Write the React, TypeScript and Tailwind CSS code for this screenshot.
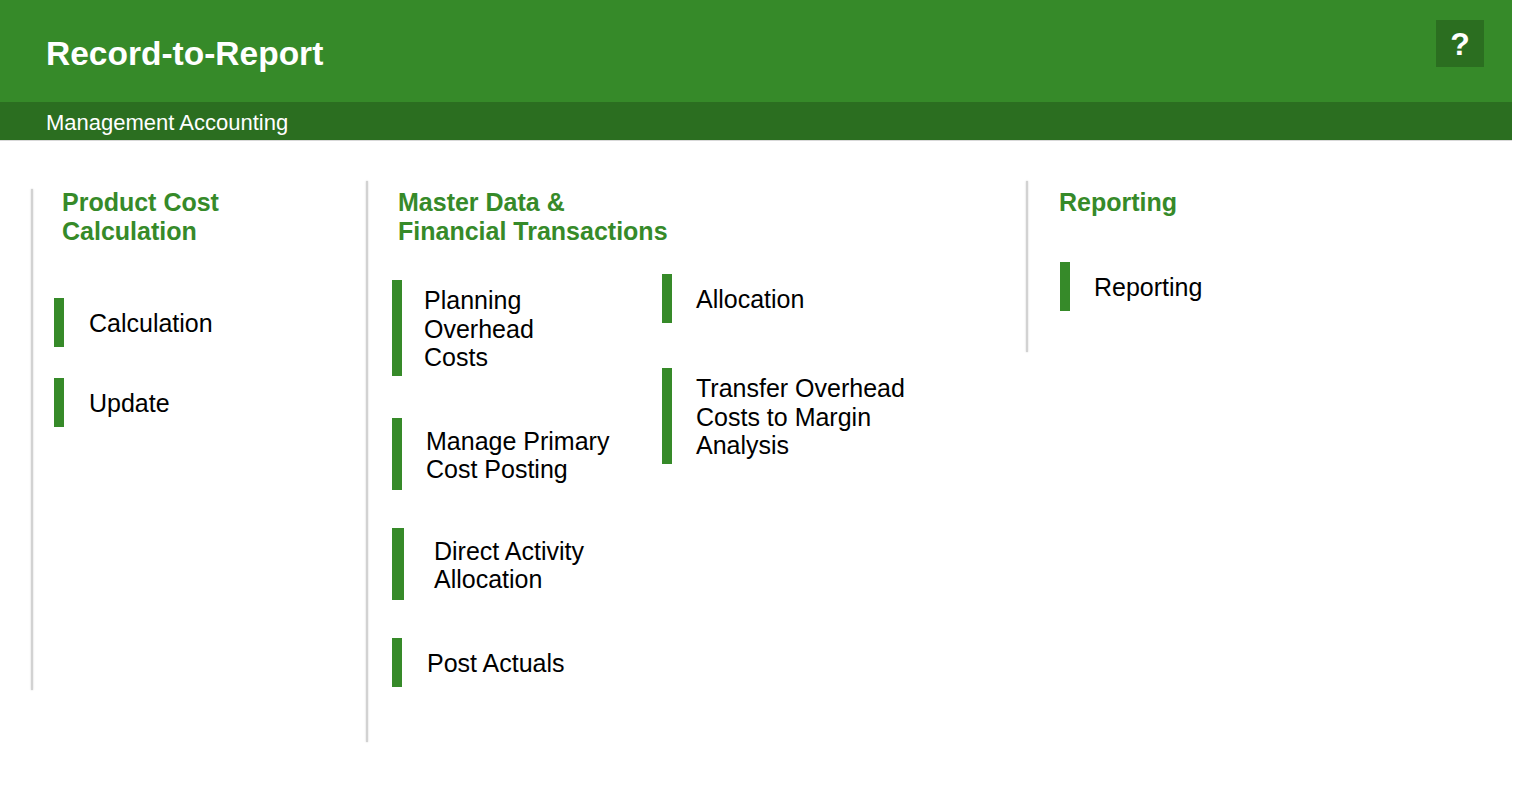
const font = { fontFamily: '"Liberation Sans", Arial, sans-serif' };

interface Tile {
  label: string[];
  height: number;
  gap: number;
  top: number;
  bar?: number;
}

const Bar = ({ h, w = 10 }: { h: number; w?: number }) => (
  <div className="bg-[#368a29] shrink-0" style={{ height: h, width: w }} />
);

const TileItem = ({ label, height, gap, top, bar = 10 }: Tile) => (
  <div className="flex items-center" style={{ marginTop: top }}>
    <Bar h={height} w={bar} />
    <div
      className="text-[25px] leading-[28.5px] text-black pt-[2px]"
      style={{ marginLeft: gap }}
    >
      {label.map((l) => (
        <div key={l}>{l}</div>
      ))}
    </div>
  </div>
);

const Divider = ({ top, h }: { top: number; h: number }) => (
  <div
    className="w-[2px] bg-[#d2d2d2] shadow-[0_0_2px_rgba(0,0,0,0.2)] shrink-0"
    style={{ marginTop: top, height: h }}
  />
);

const Heading = ({ lines, left }: { lines: string[]; left: number }) => (
  <div
    className="text-[25px] leading-[29px] font-bold text-[#368a29]"
    style={{ marginLeft: left }}
  >
    {lines.map((l) => (
      <div key={l}>{l}</div>
    ))}
  </div>
);

export default function App() {
  return (
    <div className="w-[1514px] min-h-[805px] bg-white" style={font}>
      <header className="w-[1512px]">
        <div className="h-[102px] bg-[#368a29] flex items-start justify-between pl-[46px] pr-[28px]">
          <h1 className="text-[33.5px] font-bold text-white leading-none mt-[37px]">
            Record-to-Report
          </h1>
          <button className="mt-[20px] w-[48px] h-[47px] bg-[#2b6e20] text-white text-[32px] font-bold leading-none flex items-center justify-center">
            ?
          </button>
        </div>
        <div className="h-[39px] bg-[#2b6e20] border-b border-[#d9d9d9] pl-[46px] flex items-center">
          <span className="text-[22px] text-white leading-none pt-[3px]">
            Management Accounting
          </span>
        </div>
      </header>

      <main className="flex items-start pl-[31px]">
        {/* Product Cost Calculation */}
        <div className="flex w-[335px]">
          <Divider top={48} h={501} />
          <div className="pt-[47px]">
            <Heading lines={["Product Cost", "Calculation"]} left={29} />
            <div className="ml-[21px]">
              <TileItem label={["Calculation"]} height={49} gap={25} top={52} />
              <TileItem label={["Update"]} height={49} gap={25} top={31} />
            </div>
          </div>
        </div>

        {/* Master Data & Financial Transactions */}
        <div className="flex w-[660px]">
          <Divider top={40} h={561} />
          <div className="pt-[47px]">
            <Heading lines={["Master Data &", "Financial Transactions"]} left={30} />
            <div className="flex ml-[24px]">
              <div className="w-[270px]">
                <TileItem label={["Planning", "Overhead", "Costs"]} height={96} gap={22} top={34} />
                <TileItem label={["Manage Primary", "Cost Posting"]} height={72} gap={24} top={42} />
                <TileItem label={["Direct Activity", "Allocation"]} height={72} gap={30} top={38} bar={12} />
                <TileItem label={["Post Actuals"]} height={49} gap={25} top={38} />
              </div>
              <div>
                <TileItem label={["Allocation"]} height={49} gap={24} top={28} />
                <TileItem label={["Transfer Overhead", "Costs to Margin", "Analysis"]} height={96} gap={24} top={45} />
              </div>
            </div>
          </div>
        </div>

        {/* Reporting */}
        <div className="flex flex-1">
          <Divider top={40} h={171} />
          <div className="pt-[47px]">
            <Heading lines={["Reporting"]} left={31} />
            <div className="ml-[32px]">
              <TileItem label={["Reporting"]} height={49} gap={24} top={45} />
            </div>
          </div>
        </div>
      </main>
    </div>
  );
}
